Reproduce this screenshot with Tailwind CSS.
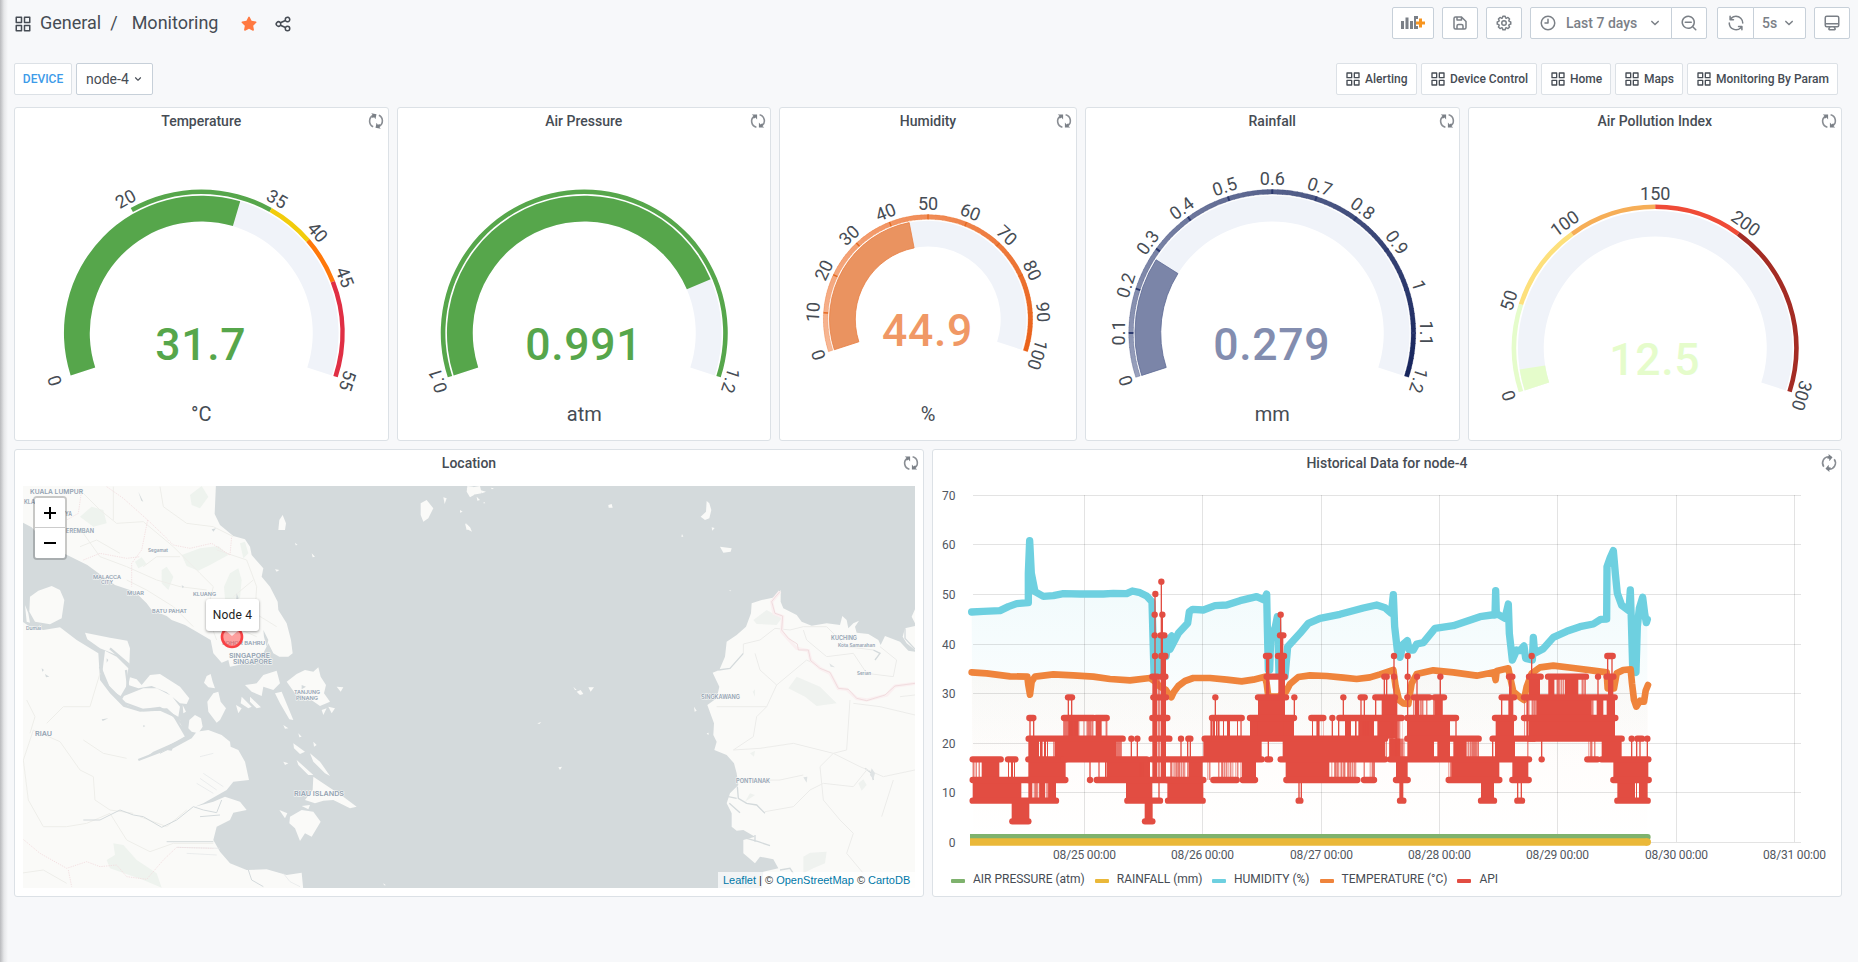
<!DOCTYPE html>
<html lang="en">
<head>
<meta charset="utf-8">
<title>Monitoring</title>
<script src="https://cdn.jsdelivr.net/npm/@tailwindcss/browser@4"></script>
</head>
<body class="relative h-[962px] w-[1858px] overflow-hidden bg-[#f7f8fa] font-['Roboto',sans-serif] text-[#464c54]">
<svg class="hidden">
  <defs>
    <symbol id="apps" viewBox="0 0 24 24"><path d="M10,13H3a1,1,0,0,0-1,1v7a1,1,0,0,0,1,1h7a1,1,0,0,0,1-1V14A1,1,0,0,0,10,13ZM9,20H4V15H9ZM21,2H14a1,1,0,0,0-1,1v7a1,1,0,0,0,1,1h7a1,1,0,0,0,1-1V3A1,1,0,0,0,21,2ZM20,9H15V4h5Zm1,4H14a1,1,0,0,0-1,1v7a1,1,0,0,0,1,1h7a1,1,0,0,0,1-1V14A1,1,0,0,0,21,13Zm-1,7H15V15h5ZM10,2H3A1,1,0,0,0,2,3v7a1,1,0,0,0,1,1h7a1,1,0,0,0,1-1V3A1,1,0,0,0,10,2ZM9,9H4V4H9Z"/></symbol>
    <symbol id="share" viewBox="0 0 24 24"><path d="M18,14a4,4,0,0,0-3.08,1.48l-5.1-2.35a3.64,3.64,0,0,0,0-2.26l5.1-2.35A4,4,0,1,0,14,6a4.17,4.17,0,0,0,.07.71L8.79,9.14a4,4,0,1,0,0,5.72l5.28,2.43A4.17,4.17,0,0,0,14,18a4,4,0,1,0,4-4ZM18,4a2,2,0,1,1-2,2A2,2,0,0,1,18,4ZM6,14a2,2,0,1,1,2-2A2,2,0,0,1,6,14Zm12,6a2,2,0,1,1,2-2A2,2,0,0,1,18,20Z"/></symbol>
    <symbol id="star" viewBox="0 0 24 24"><path d="M17.56,21a1,1,0,0,1-.46-.11L12,18.22l-5.1,2.67a1,1,0,0,1-1.45-1.06l1-5.63-4.12-4a1,1,0,0,1-.25-1,1,1,0,0,1,.81-.68l5.7-.83,2.51-5.13a1,1,0,0,1,1.8,0l2.54,5.12,5.7.83a1,1,0,0,1,.81.68,1,1,0,0,1-.25,1l-4.12,4,1,5.63a1,1,0,0,1-.4,1A1,1,0,0,1,17.56,21Z"/></symbol>
    <symbol id="save" viewBox="0 0 24 24"><path d="M20.71,9.29l-6-6a1,1,0,0,0-.32-.21A1.09,1.09,0,0,0,14,3H6A3,3,0,0,0,3,6V18a3,3,0,0,0,3,3H18a3,3,0,0,0,3-3V10A1,1,0,0,0,20.71,9.29ZM9,5h4V7H9Zm6,14H9V16a1,1,0,0,1,1-1h4a1,1,0,0,1,1,1Zm4-1a1,1,0,0,1-1,1H17V16a3,3,0,0,0-3-3H10a3,3,0,0,0-3,3v3H6a1,1,0,0,1-1-1V6A1,1,0,0,1,6,5H7V8A1,1,0,0,0,8,9h6a1,1,0,0,0,1-1V6.41l4,4Z"/></symbol>
    <symbol id="cog" viewBox="0 0 24 24"><path d="M21.32,9.55l-1.89-.63.89-1.78A1,1,0,0,0,20.13,6L18,3.87a1,1,0,0,0-1.15-.19l-1.78.89-.63-1.89A1,1,0,0,0,13.5,2h-3a1,1,0,0,0-.95.68L8.92,4.57,7.14,3.68A1,1,0,0,0,6,3.87L3.87,6a1,1,0,0,0-.19,1.15l.89,1.78-1.89.63A1,1,0,0,0,2,10.5v3a1,1,0,0,0,.68.95l1.89.63-.89,1.78A1,1,0,0,0,3.87,18L6,20.13a1,1,0,0,0,1.15.19l1.78-.89.63,1.89a1,1,0,0,0,.95.68h3a1,1,0,0,0,.95-.68l.63-1.89,1.78.89A1,1,0,0,0,18,20.13L20.13,18a1,1,0,0,0,.19-1.15l-.89-1.78,1.89-.63A1,1,0,0,0,22,13.5v-3A1,1,0,0,0,21.32,9.55ZM20,12.78l-1.2.4A2,2,0,0,0,17.64,16l.57,1.14-1.1,1.1L16,17.64a2,2,0,0,0-2.79,1.16l-.4,1.2H11.22l-.4-1.2A2,2,0,0,0,8,17.64l-1.14.57-1.1-1.1L6.36,16A2,2,0,0,0,5.2,13.18L4,12.78V11.22l1.2-.4A2,2,0,0,0,6.36,8L5.79,6.89l1.1-1.1L8,6.36A2,2,0,0,0,10.82,5.2l.4-1.2h1.56l.4,1.2A2,2,0,0,0,16,6.36l1.14-.57,1.1,1.1L17.64,8a2,2,0,0,0,1.16,2.79l1.2.4ZM12,8a4,4,0,1,0,4,4A4,4,0,0,0,12,8Zm0,6a2,2,0,1,1,2-2A2,2,0,0,1,12,14Z"/></symbol>
    <symbol id="clock" viewBox="0 0 24 24"><path d="M12,2A10,10,0,1,0,22,12,10,10,0,0,0,12,2Zm0,18a8,8,0,1,1,8-8A8,8,0,0,1,12,20ZM12,6a1,1,0,0,0-1,1v4H8a1,1,0,0,0,0,2h4a1,1,0,0,0,1-1V7A1,1,0,0,0,12,6Z"/></symbol>
    <symbol id="down" viewBox="0 0 24 24"><path d="M17,9.17a1,1,0,0,0-1.41,0L12,12.71,8.46,9.17a1,1,0,0,0-1.41,0,1,1,0,0,0,0,1.42l4.24,4.24a1,1,0,0,0,1.42,0L17,10.59A1,1,0,0,0,17,9.17Z"/></symbol>
    <symbol id="zoomout" viewBox="0 0 24 24"><path d="M21.71,20.29,18,16.61A9,9,0,1,0,16.61,18l3.68,3.68a1,1,0,0,0,1.42,0A1,1,0,0,0,21.71,20.29ZM11,18a7,7,0,1,1,7-7A7,7,0,0,1,11,18Zm4-8H7a1,1,0,0,0,0,2h8a1,1,0,0,0,0-2Z"/></symbol>
    <symbol id="sync" viewBox="0 0 24 24"><path d="M19.91,15.51H15.38a1,1,0,0,0,0,2h2.4A8,8,0,0,1,4,12a1,1,0,0,0-2,0,10,10,0,0,0,16.88,7.23V21a1,1,0,0,0,2,0V16.5A1,1,0,0,0,19.91,15.51ZM12,2A10,10,0,0,0,5.12,4.77V3a1,1,0,0,0-2,0V7.5a1,1,0,0,0,1,1h4.5a1,1,0,0,0,0-2H6.22A8,8,0,0,1,20,12a1,1,0,0,0,2,0A10,10,0,0,0,12,2Z"/></symbol>
    <symbol id="monitor" viewBox="0 0 24 24"><path d="M19,2H5A3,3,0,0,0,2,5V15a3,3,0,0,0,3,3H7.64l-.58,1a2,2,0,0,0,0,2,2,2,0,0,0,1.75,1h6.46A2,2,0,0,0,17,21a2,2,0,0,0,0-2l-.59-1H19a3,3,0,0,0,3-3V5A3,3,0,0,0,19,2ZM8.77,20,10,18H14l1.2,2ZM20,15a1,1,0,0,1-1,1H5a1,1,0,0,1-1-1V14H20Zm0-3H4V5A1,1,0,0,1,5,4H19a1,1,0,0,1,1,1Z"/></symbol>
    <symbol id="spin" viewBox="-8 -8 16 16" overflow="visible"><g fill="none" stroke="#8a8e94" stroke-width="1.6"><path d="M-1.6 6.2A6.2 6.2 0 0 1 -4 -4.7"/><path d="M1.6 -6.2A6.2 6.2 0 0 1 4 4.7"/></g><path fill="#7b8087" d="M-6.2-6.6H-.9V-1.6L-2.6-3.4-4.2-2.2-5-3.8-4.4-4.9ZM6.2 6.6H.9V1.6L2.6 3.4 4.2 2.2 5 3.8 4.4 4.9Z"/></symbol>
  </defs>
</svg>

<header class="flex h-[39px] items-end justify-between pl-[14px] pr-[8px]">
  <div class="flex h-8 items-center text-[18px] leading-none">
    <svg class="mt-[1px] h-[18px] w-[18px] fill-[#464c54]"><use href="#apps"/></svg>
    <span class="ml-2">General</span><span class="ml-[9px]">/</span><span class="ml-[14px]">Monitoring</span>
    <svg class="ml-[22px] mt-[2px] h-[18px] w-[18px] fill-[#ff7941]"><use href="#star"/></svg>
    <svg class="ml-4 mt-[2px] h-[18px] w-[18px] fill-[#464c54]"><use href="#share"/></svg>
  </div>
  <div class="flex h-8 items-stretch text-[14px] font-medium text-[#7b8087]">
    <div class="flex w-[42px] items-center justify-center rounded-[2px] border border-[#c7d0d9] bg-white">
      <svg class="h-[16px] w-[24px]" viewBox="0 0 24 16"><path fill="#7b8087" d="M0 6h3v8H0zM4.500 2.500h3V14h-3zM9 6h3v8H9z"/><path fill="#7b8087" d="M13 1h4v3h-2v7h2v3h-4z"/><path fill="#f79520" d="M18 3.500h3v3h3v3h-3v3h-3v-3h-3v-3h3z"/></svg>
    </div>
    <div class="ml-[8px] flex w-[36px] items-center justify-center rounded-[2px] border border-[#c7d0d9] bg-white"><svg class="h-[18px] w-[18px] fill-[#7b8087]"><use href="#save"/></svg></div>
    <div class="ml-[8px] flex w-[36px] items-center justify-center rounded-[2px] border border-[#c7d0d9] bg-white"><svg class="h-[18px] w-[18px] fill-[#7b8087]"><use href="#cog"/></svg></div>
    <div class="ml-[8px] flex w-[142px] items-center rounded-l-[2px] border border-[#c7d0d9] bg-white pl-2"><svg class="h-[18px] w-[18px] fill-[#7b8087]"><use href="#clock"/></svg><span class="ml-[9px] whitespace-nowrap">Last 7 days</span><svg class="ml-[9px] h-[18px] w-[18px] fill-[#7b8087]"><use href="#down"/></svg></div>
    <div class="-ml-px flex w-[36px] items-center justify-center rounded-r-[2px] border border-[#c7d0d9] bg-white"><svg class="h-[18px] w-[18px] fill-[#7b8087]"><use href="#zoomout"/></svg></div>
    <div class="ml-[10px] flex w-[37px] items-center justify-center rounded-l-[2px] border border-[#c7d0d9] bg-white"><svg class="h-[18px] w-[18px] fill-[#7b8087]"><use href="#sync"/></svg></div>
    <div class="-ml-px flex w-[53px] items-center rounded-r-[2px] border border-[#c7d0d9] bg-white pl-[8px]"><span>5s</span><svg class="ml-[3px] h-[18px] w-[18px] fill-[#7b8087]"><use href="#down"/></svg></div>
    <div class="ml-[8px] flex w-[36px] items-center justify-center rounded-[2px] border border-[#c7d0d9] bg-white"><svg class="h-[18px] w-[18px] fill-[#7b8087]"><use href="#monitor"/></svg></div>
  </div>
</header>

<nav class="mt-6 flex h-8 items-stretch justify-between pl-[14px] pr-[20px] text-[12px] font-medium">
  <div class="flex gap-1">
    <div class="flex w-[58px] items-center justify-center rounded-[2px] border border-[#dce1e6] bg-white text-[#3d9be9]">DEVICE</div>
    <div class="flex w-[77px] items-center rounded-[2px] border border-[#c7d0d9] bg-white pl-[9px] text-[14px] font-normal">node-4<svg class="ml-[2px] h-[14px] w-[14px] fill-[#464c54]"><use href="#down"/></svg></div>
  </div>
  <div class="flex gap-1">
    <div class="flex w-[81px] items-center gap-[4px] rounded-[2px] border border-[#dce1e6] bg-white pl-2"><svg class="h-4 w-4 fill-[#464c54]"><use href="#apps"/></svg>Alerting</div>
    <div class="flex w-[116px] items-center gap-[4px] whitespace-nowrap rounded-[2px] border border-[#dce1e6] bg-white pl-2"><svg class="h-4 w-4 fill-[#464c54]"><use href="#apps"/></svg>Device Control</div>
    <div class="flex w-[70px] items-center gap-[4px] rounded-[2px] border border-[#dce1e6] bg-white pl-2"><svg class="h-4 w-4 fill-[#464c54]"><use href="#apps"/></svg>Home</div>
    <div class="flex w-[68px] items-center gap-[4px] rounded-[2px] border border-[#dce1e6] bg-white pl-2"><svg class="h-4 w-4 fill-[#464c54]"><use href="#apps"/></svg>Maps</div>
    <div class="flex w-[151px] items-center gap-[4px] whitespace-nowrap rounded-[2px] border border-[#dce1e6] bg-white pl-2"><svg class="h-4 w-4 fill-[#464c54]"><use href="#apps"/></svg>Monitoring By Param</div>
  </div>
</nav>

<main class="ml-[14px] mt-3 grid w-[1828px] grid-cols-24 grid-rows-[334px_448px] gap-2">
  <section class="col-span-5 rounded-[3px] border border-[#dce1e6] bg-white">
    <div class="grid h-7 grid-cols-[24px_1fr_24px] items-center pb-[2px] text-center text-[14px] font-medium"><span></span><h2>Temperature</h2><svg class="ml-[4px] h-4 w-4" style="rotate:12deg"><use href="#spin"/></svg></div>
    <svg id="g1" class="block h-[304px] w-full"></svg>
  </section>
  <section class="col-span-5 rounded-[3px] border border-[#dce1e6] bg-white">
    <div class="grid h-7 grid-cols-[24px_1fr_24px] items-center pb-[2px] text-center text-[14px] font-medium"><span></span><h2>Air Pressure</h2><svg class="ml-[4px] h-4 w-4"><use href="#spin"/></svg></div>
    <svg id="g2" class="block h-[304px] w-full"></svg>
  </section>
  <section class="col-span-4 rounded-[3px] border border-[#dce1e6] bg-white">
    <div class="grid h-7 grid-cols-[24px_1fr_24px] items-center pb-[2px] text-center text-[14px] font-medium"><span></span><h2>Humidity</h2><svg class="ml-[4px] h-4 w-4"><use href="#spin"/></svg></div>
    <svg id="g3" class="block h-[304px] w-full"></svg>
  </section>
  <section class="col-span-5 rounded-[3px] border border-[#dce1e6] bg-white">
    <div class="grid h-7 grid-cols-[24px_1fr_24px] items-center pb-[2px] text-center text-[14px] font-medium"><span></span><h2>Rainfall</h2><svg class="ml-[4px] h-4 w-4"><use href="#spin"/></svg></div>
    <svg id="g4" class="block h-[304px] w-full"></svg>
  </section>
  <section class="col-span-5 rounded-[3px] border border-[#dce1e6] bg-white">
    <div class="grid h-7 grid-cols-[24px_1fr_24px] items-center pb-[2px] text-center text-[14px] font-medium"><span></span><h2>Air Pollution Index</h2><svg class="ml-[4px] h-4 w-4"><use href="#spin"/></svg></div>
    <svg id="g5" class="block h-[304px] w-full"></svg>
  </section>

  <section class="col-span-12 rounded-[3px] border border-[#dce1e6] bg-white">
    <div class="grid h-7 grid-cols-[24px_1fr_24px] items-center pb-[2px] text-center text-[14px] font-medium"><span></span><h2>Location</h2><svg class="ml-[4px] h-4 w-4"><use href="#spin"/></svg></div>
    <div class="relative m-2 h-[402px] overflow-hidden bg-[#d4dadc]">
      <svg class="block h-[402px] w-[892px]" viewBox="23 486 892 402">
        <g id="west" transform="translate(0 440) scale(.33333)" fill="#fafaf8">
          <path d="M60 130H648L644 222 660 255 700 288 735 298 750 320 755 345 790 385 785 410 810 440 833 485 835 510 860 550 873 600 878 640 865 650 838 650 820 640 805 610 790 640 760 655 715 675 690 680 685 660 665 668 640 640 632 600 590 575 555 555 515 540 500 528 455 510 440 490 405 455 345 435 310 410 262 375 215 352 170 330 130 300 95 262 60 243Z"/>
          <path d="M90 470 115 452 155 438 180 450 193 480 185 535 150 553 105 545 88 515ZM255 578 330 593 382 602 390 625 388 675 350 645 300 625 262 598ZM315 632 350 650 385 685 378 740 362 768 340 755 315 720 308 690ZM390 712 410 718 425 735 450 705 480 702 540 740 568 775 560 792 540 790 500 757 455 738 415 745 385 735ZM372 768 430 745 470 745 515 768 540 800 535 830 480 800 420 808 380 795 365 780ZM568 840 585 825 603 835 608 860 595 880 575 875 565 865ZM530 838 548 862 540 840ZM548 795 558 815 550 820Z"/>
          <path d="M60 540 90 560 130 570 180 562 230 600 295 640 300 720 330 760 370 800 420 815 480 812 520 830 555 890 540 900 460 935 410 972 400 955 430 950 520 925 575 895 590 875 625 870 665 885 690 905 692 920 715 930 735 965 747 1020 700 1025 680 1050 610 1090 585 1100 640 1085 675 1070 720 1085 740 1110 700 1118 690 1140 650 1160 640 1200 660 1235 690 1270 740 1290 800 1288 860 1305 905 1298 910 1350H60Z"/>
          <path d="M75 495 85 520 90 548 80 545ZM620 708 632 702 638 725 645 745 625 742 612 728ZM640 760 655 755 662 785 678 805 660 840 650 848 625 815 622 785ZM735 735 770 730 790 705 830 692 840 730 820 750 790 740 785 768 755 755ZM860 725 890 702 915 690 940 695 955 682 962 710 978 735 972 760 990 785 960 798 920 770 885 760ZM825 760 845 755 880 840 868 838 840 790ZM725 770 755 800 745 805 722 790ZM750 770 783 802 770 805 750 785ZM708 795 725 805 715 820ZM1010 740 1030 742 1022 755ZM985 800 1005 805 995 820ZM965 810 980 805 970 825ZM880 910 915 935 900 942 882 925ZM930 940 960 965 990 1008 975 1000 940 965ZM890 960 940 1005 925 1005 895 975ZM940 1010 985 1040 1030 1070 1070 1100 1050 1105 1000 1080 970 1082 945 1090 915 1080 938 1050ZM905 1098 930 1095 925 1108ZM838 1110 862 1120 855 1135ZM870 1130 905 1110 940 1115 962 1145 935 1190 915 1180 900 1203 885 1165 868 1150Z"/>
          <path d="M838 240 848 225 858 250 855 270 835 270ZM1262 190 1280 180 1300 205 1285 235 1270 245 1262 225ZM1400 145 1440 138 1445 160 1415 165ZM1395 250 1412 265 1400 270ZM935 340 945 350 938 352ZM825 388 838 390 830 395ZM885 308 893 315 887 316ZM1330 172 1340 175 1334 192ZM895 880 905 890 898 892ZM940 905 950 915 942 920ZM850 965 865 970 855 975ZM850 855 865 865 855 866ZM1150 1330 1158 1336 1152 1336Z"/>
          <g fill="#eef3ee"><path d="M545 345 600 325 655 318 685 345 630 375 595 392 560 378ZM690 400 715 385 725 420 720 475 675 478 672 440ZM240 230 275 200 310 210 320 250 280 260ZM485 390 500 380 520 410 505 450 485 430ZM570 165 605 138 625 170 600 205 575 195ZM405 365 425 352 440 372 415 385ZM340 1210 370 1215 410 1260 470 1300 485 1343 430 1320 330 1285 320 1260 345 1245ZM720 310 735 305 745 340 730 355Z"/></g>
          <g fill="none" stroke="#eeeeea" stroke-width="3"><path d="M250 160 300 210 350 250 430 245 520 320M340 140V240M520 320 600 400 640 440 620 520 650 600M250 280 300 350 380 380 470 420 540 440 620 450M380 420 440 450 520 500 580 560M430 380 470 350 540 350M650 330 740 360 770 440 765 520 830 560M700 290 640 260 560 250 490 200 480 140M240 320 290 300 360 340M760 420 700 470M640 540 700 560 770 590M80 780 105 830 90 880M100 870 180 905 240 990 280 1010 285 1080 330 1110 400 1120M100 870 70 960 85 1080 130 1160 200 1160 260 1150 330 1120M330 1120 380 1200 450 1235 520 1210 640 1210M420 1130 500 1160 560 1110M140 850 190 800 270 800 300 700M60 1300 130 1290 200 1330M250 900 310 940 380 955"/></g>
          <g fill="none" stroke="#d4dadc" stroke-width="3"><path d="M250 1140 300 1140 360 1110 400 1125 430 1130 485 1162 530 1140 580 1100 610 1110 650 1118 665 1080M500 1205 640 1205M600 1130 660 1125M480 940 510 925M745 1290 755 1320 790 1340"/><path stroke-width="7" d="M330 625 388 675M378 690 385 745M300 680 325 740 375 790 430 810 500 808 545 850 560 890 480 935 415 960"/><path stroke-width="2" stroke="#e3e6e7" d="M640 940 600 950M610 1000 670 1040M600 1015 650 1050M590 1030 640 1060M530 1222 660 1225M560 1240 650 1245M850 1300 870 1325 900 1340"/></g>
          <g fill="none" stroke="#f2dcdf" stroke-width="2.500" stroke-dasharray="4 3"><path d="M320 140 370 175 443 240 490 285 520 315 570 325 635 310 690 345 695 290M443 240 425 330 395 370 395 440M245 150 235 220 200 240M250 360 300 340 380 355 420 350M60 1190 120 1240 200 1285 260 1265 300 1280 350 1275 380 1310 440 1318 490 1260 530 1222 640 1225M205 1290 215 1340"/></g>
          <path fill="#d4dadc" d="M415 155 430 185 424 182ZM635 268 648 265 640 275ZM125 685 132 690 127 695ZM135 702 148 710 138 712ZM305 838 325 835 308 843ZM430 855 436 858 430 862ZM545 435 552 440 548 445ZM710 460 716 475 708 485ZM790 570 805 600 800 620 792 590ZM320 655 325 660 320 668ZM500 930 520 920 515 932ZM905 735 918 740 905 748Z"/>
        </g>
        <g id="east" transform="translate(460 440) scale(.33333)" fill="#fafaf8">
          <path d="M1365 630 1340 610 1328 590 1335 565 1365 558ZM1365 508 1355 530 1365 550ZM1365 635 1345 632 1320 605 1275 588 1262 615 1255 600 1225 582 1190 578 1185 560 1197 542 1180 550 1165 565 1160 540 1147 528 1140 555 1100 550 1055 557 1025 545 1010 525 970 505 962 485V450L945 472 905 480 875 490 873 520 858 560 830 585 800 605 795 650 778 690 758 698 778 740 770 775 742 795 762 850 760 885 770 905 763 930 800 945 822 970 830 1000 835 1035 810 1060 800 1090 815 1120 815 1160 830 1172 850 1170 885 1190 850 1200 850 1240 885 1270 900 1250 940 1258 955 1285 910 1295 905 1350H1365Z"/>
          <path d="M22 138 40 140 42 165 30 172 20 155ZM445 195 455 192 458 203 446 203ZM740 183 748 190 754 210 748 235 735 240 722 230 738 215ZM780 320 815 325 812 335 790 338ZM18 250 30 262 36 275 22 268ZM345 715 352 720ZM350 755 362 750 370 762 360 765ZM385 742 402 742 392 755ZM340 740 350 750 345 750ZM295 982 306 980 300 990ZM702 800 710 812 704 815ZM740 880 746 878 745 886ZM755 262 764 264 757 272ZM666 282 670 290 664 290ZM60 150 78 155 66 160ZM92 143 102 145 96 148ZM50 170 60 180 52 182ZM72 185 76 190 70 190ZM0 210 8 215 0 218ZM232 850 244 846 238 852ZM808 450 814 452 810 454Z"/>
          <g fill="#eff2ef"><path d="M880 540 920 510 965 535 950 555 890 552ZM985 745 1010 710 1080 740 1130 790 1070 798 1035 770ZM1030 1300 1030 1250 1050 1238 1100 1235 1095 1270 1060 1285ZM855 1085 870 1060 885 1065ZM1195 1030 1210 1018 1220 1035 1205 1052ZM870 940 885 932 882 950ZM878 755 885 748 885 770Z"/></g>
          <path fill="none" stroke="#d4dadc" stroke-width="4" d="M775 690 810 685 850 640M860 1195 895 1205 930 1217M832 1040 835 1075 860 1090 890 1095 915 1120M1335 565 1335 595 1365 628M885 1185 885 1205M1215 985 1235 1000 1240 1020M805 1070 830 1075M808 1090 840 1118M1240 630 1260 640 1245 660M960 1290 990 1285 1000 1300"/>
          <g fill="none" stroke="#ececea" stroke-width="3"><path d="M850 640 850 612 900 600 945 565 990 570 1030 560 1100 560 1160 620 1240 630M885 640 900 690 950 735 1040 660 1080 680M950 735 920 800 770 800M1170 780 1160 930 1120 940 1080 980 1090 1080 1140 1140 1180 1180 1160 1240 1210 1300M920 800 890 830 880 890 820 930 900 925 1000 910 1120 940 1200 980 1270 1010 1365 990M915 1115 1000 1100 1050 1050 1090 1030 1180 1040 1220 990M1030 570 1040 600 1100 650 1180 640 1220 700 1300 710 1310 660 1260 620M835 1020 960 1020 1030 1005M1180 790 1260 800 1365 825M1300 1020 1265 1130M1320 770 1365 765"/></g>
          <path fill="none" stroke="#faf0f1" stroke-width="10" d="M960 455 935 485 942 520 968 530 965 575 1010 625 1045 632 1052 660 1080 685 1110 700 1135 745 1160 748 1190 775 1220 780 1280 765 1305 738 1365 730"/>
          <path fill="none" stroke="#eed7da" stroke-width="2.500" d="M960 455 945 472 935 485 945 520 968 528 965 570 985 595 1012 612 1015 630 1045 630 1052 662 1080 685 1110 697 1135 745 1165 748 1190 775 1220 782 1275 765 1305 738 1365 730"/>
          <path fill="#dfe3e4" d="M1108 670 1125 682 1112 680ZM1030 1012 1042 1010 1040 1028ZM1235 985 1245 1000 1240 1018 1230 1005Z"/>
        </g>
        <g id="places" font-family="Inter, sans-serif" font-weight="600" fill="#93a2b2" stroke="#fafaf8" stroke-width="1" paint-order="stroke"></g>
      </svg>
      <div class="absolute left-[10px] top-[10px] w-[34px] rounded-[4px] border-2 border-black/20 bg-clip-padding text-center text-black">
        <div class="flex h-[30px] items-center justify-center rounded-t-[2px] border-b border-[#ccc] bg-white"><svg class="h-3 w-3" viewBox="0 0 12 12"><path d="M6 0V12M0 6H12" stroke="#000" stroke-width="2"/></svg></div>
        <div class="flex h-[30px] items-center justify-center rounded-b-[2px] bg-white"><svg class="h-3 w-3" viewBox="0 0 12 12"><path d="M0 6H12" stroke="#000" stroke-width="2"/></svg></div>
      </div>
      <svg class="absolute left-[197px] top-[139px] h-6 w-6 overflow-visible" viewBox="-12 -12 24 24"><circle r="10" fill="#f44" fill-opacity=".5" stroke="#f94144" stroke-width="2.600"/><path d="M-7 -6H7L0 0Z" transform="translate(0 -1)" fill="#fff" fill-opacity=".75"/></svg>
      <div class="absolute left-[183px] top-[113px] flex h-8 w-[53px] items-center justify-center rounded-[3px] bg-white text-[12px] tracking-[0.2px] text-[#222] shadow-[0_1px_3px_rgba(0,0,0,0.4)]">Node 4</div>
      <div class="absolute bottom-0 right-0 h-4 w-[197px] whitespace-nowrap bg-white/70 pl-[5px] font-['Liberation_Sans',sans-serif] text-[11px] leading-4 text-[#333]"><span class="text-[#0078a8]">Leaflet</span> | © <span class="text-[#0078a8]">OpenStreetMap</span> © <span class="text-[#0078a8]">CartoDB</span></div>
    </div>
  </section>

  <section class="col-span-12 rounded-[3px] border border-[#dce1e6] bg-white">
    <div class="grid h-7 grid-cols-[24px_1fr_24px] items-center pb-[2px] text-center text-[14px] font-medium"><span></span><h2>Historical Data for node-4</h2><svg class="ml-[4px] h-4 w-4" style="rotate:40deg"><use href="#spin"/></svg></div>
    <svg id="chart" class="block h-[390px] w-[908px]" viewBox="933 478 908 390"></svg>
    <div class="flex h-[22px] items-center pl-[18px] text-[12px]">
      <i class="mr-2 mt-1 h-1 w-[14px] rounded-[1px] bg-[#7eb26d]"></i><span class="mr-[10px]">AIR PRESSURE (atm)</span>
      <i class="mr-2 mt-1 h-1 w-[14px] rounded-[1px] bg-[#eab839]"></i><span class="mr-[9.500px]">RAINFALL (mm)</span>
      <i class="mr-2 mt-1 h-1 w-[14px] rounded-[1px] bg-[#6ed0e0]"></i><span class="mr-[10px]">HUMIDITY (%)</span>
      <i class="mr-2 mt-1 h-1 w-[14px] rounded-[1px] bg-[#ef843c]"></i><span class="mr-[10px]">TEMPERATURE (°C)</span>
      <i class="mr-2 mt-1 h-1 w-[14px] rounded-[1px] bg-[#e24d42]"></i><span>API</span>
    </div>
  </section>
</main>
<div class="absolute left-0 top-0 h-full w-2 bg-linear-to-r from-[#b9babd] via-[#e6e7e9] to-[#f7f8fa]"></div>

<script>
const rad = a => a * Math.PI / 180;
const pt = (cx, cy, r, a) => (cx + r * Math.sin(rad(a))).toFixed(2) + ' ' + (cy - r * Math.cos(rad(a))).toFixed(2);
const ring = (cx, cy, r0, r1, a0, a1, attrs) => {
  const big = a1 - a0 > 180 ? 1 : 0;
  return `<path d="M${pt(cx, cy, r1, a0)}A${r1} ${r1} 0 ${big} 1 ${pt(cx, cy, r1, a1)}L${pt(cx, cy, r0, a1)}A${r0} ${r0} 0 ${big} 0 ${pt(cx, cy, r0, a0)}Z" ${attrs}/>`;
};
const mix = (a, b, t) => 'rgb(' + a.map((v, i) => Math.round(v + (b[i] - v) * t)) + ')';
function gauge(id, o) {
  const half = o.w / 2, cx = half, cy = o.cy - 136, R = o.R;
  const ang = v => (v - o.min) / (o.max - o.min) * 216 - 108;
  let s = ring(cx, cy, R - 32, R - 6.2, -108, 108, 'fill="#f0f3f9"');
  s += ring(cx, cy, R - 32, R - 6.2, -108, ang(o.value), `fill="${o.fill}" ${o.edge ? `stroke="${o.edge}" stroke-width=".8"` : ''}`);
  if (o.grad) {
    for (let i = 0; i < 108; i++) s += ring(cx, cy, R - 4.6, R, -108 + i * 2, Math.min(108, -105.6 + i * 2), `fill="${mix(o.grad[0], o.grad[1], i / 107)}"`);
    o.labels.slice(1, -1).forEach(v => s += ring(cx, cy, R - 4.6, R, ang(v) - .4, ang(v) + .4, `fill="${o.tick}"`));
    s += ring(cx, cy, R - 4.6, R, -108, 108, `fill="none" stroke="${o.tick}" stroke-opacity=".35" stroke-width=".7"`);
  } else o.bands.forEach(b => s += ring(cx, cy, R - 4.600, R, ang(b[0]), ang(b[1]), `fill="${b[2]}"`));
  o.labels.forEach(v => {
    const a = ang(v), p = pt(cx, cy, R + 4.2, a);
    s += `<text transform="translate(${p}) rotate(${a.toFixed(2)})" font-size="18" text-anchor="middle" fill="#464c54">${v}</text>`;
  });
  s += `<text x="${cx - .4}" y="${cy + o.vy}" font-size="44.500" font-weight="500" letter-spacing=".7" text-anchor="middle" fill="${o.text || o.fill}">${o.value}</text>`;
  if (o.unit) s += `<text x="${cx}" y="284.500" font-size="20" text-anchor="middle" fill="#464c54">${o.unit}</text>`;
  const el = document.getElementById(id);
  el.setAttribute('viewBox', `0 0 ${o.w} 304`);
  el.innerHTML = s;
}
const G = '#56a64b';
gauge('g1', {w: 372.5, cy: 333, R: 143.5, vy: 26.500, min: 0, max: 55, value: 31.7, unit: '°C', fill: G, labels: [0, 20, 35, 40, 45, 55], bands: [[20, 35, G], [35, 40, '#f2cc0c'], [40, 45, '#ff780a'], [45, 55, '#e02f44']]});
gauge('g2', {w: 372.5, cy: 333, R: 143.5, vy: 26.500, min: .1, max: 1.2, value: .991, unit: 'atm', fill: G, labels: [.1, 1.2], bands: [[.1, 1.2, G]]});
gauge('g3', {w: 296, cy: 319.3, R: 104.7, vy: 27, min: 0, max: 100, value: 44.9, unit: '%', fill: '#ea9360', edge: '#e87f42', text: '#f09865', tick: '#e56a22', labels: [0, 10, 20, 30, 40, 50, 60, 70, 80, 90, 100], grad: [[247, 184, 150], [234, 96, 24]]});
gauge('g4', {w: 372.5, cy: 333, R: 143.5, vy: 26.500, min: 0, max: 1.2, value: .279, unit: 'mm', fill: '#7b85a8', edge: '#5d6994', text: '#838daf', tick: '#2c3a70', labels: [0, .1, .2, .3, .4, .5, .6, .7, .8, .9, 1, 1.1, 1.2], grad: [[152, 160, 188], [22, 36, 92]]});
gauge('g5', {w: 372.5, cy: 348, R: 143.5, vy: 26.500, min: 0, max: 300, value: 12.5, fill: '#e5fccb', labels: [0, 50, 100, 150, 200, 300], bands: [[0, 50, '#e5fccb'], [50, 100, '#fde07c'], [100, 150, '#f6ae57'], [150, 200, '#ef4b37'], [200, 300, '#a42c24']]});

// name, left, baseline, width, size
document.getElementById('places').innerHTML = [
  ['KUALA LUMPUR', 30, 494, 53, 6.2], ['KLA', 24, 504, 11, 5.8], ['YA', 65, 516, 7, 5.8], ['EREMBAN', 66, 533, 28, 5.600], ['Segamat', 148, 552, 20, 4.800],
  ['MALACCA', 93, 578.500, 28, 5.2], ['CITY', 101, 584, 12, 5.2], ['MUAR', 127, 595, 17, 5.2], ['KLUANG', 193, 596, 23, 5.2], ['BATU PAHAT', 152, 613, 35, 5.2],
  ['Dumai', 26, 629.500, 15, 4.800], ['JOHOR BAHRU', 222, 645, 43, 5.2], ['SINGAPORE', 229, 658, 41, 6.4], ['SINGAPORE', 233, 664, 39, 6], ['TANJUNG', 294, 694.300, 26, 5.2],
  ['PINANG', 296, 700, 22, 5.2], ['RIAU', 35, 736, 17, 6.5], ['RIAU ISLANDS', 294, 796, 50, 6.5], ['KUCHING', 831, 639.500, 26, 5.600], ['Kota Samarahan', 838, 647, 37, 4.800], ['Serian', 857, 674.500, 14, 4.800],
  ['SINGKAWANG', 701, 698.700, 39, 5.600], ['PONTIANAK', 736, 783.200, 34, 5.600]
].map(p => `<text x="${p[1]}" y="${p[2]}" textLength="${p[3]}" lengthAdjust="spacingAndGlyphs" font-size="${p[4]}">${p[0]}</text>`).join('');

// Chart: series are given in thirds of a pixel, measured from (920, 440)
const L = [1206, 1144, 1082, 1020, 958, 896, 834, 772, 710, 648, 586, 524, 462, 425];
let seed = 7;
const rnd = () => (seed = (seed * 16807) % 2147483647) / 2147483647;
let axes = '', c = '';
for (let v = 0; v <= 7; v++) {
  const y = Math.round(842 - v * 49.6) + .5;
  axes += `<path d="M973 ${y}H1801" stroke="#000" stroke-opacity=".11"/><text x="955.500" y="${y + 4}" text-anchor="end">${v * 10}</text>`;
}
[1084.500, 1202.500, 1321.500, 1439.500, 1557.500, 1676.500, 1794.500].forEach((x, i) => axes += `<path d="M${x} 495V842" stroke="#000" stroke-opacity=".11"/><text x="${x}" y="859" text-anchor="middle" textLength="63">08/${25 + i} 00:00</text>`);
const hum = '155,516 190,514 240,512 265,500 290,491 325,488 325,400 329,302 334,400 345,455 370,469 400,467 430,461 480,462 550,462 580,460 620,461 637,453 660,458 680,468 696,485 702,700 714,700 718,600 730,590 738,650 745,600 755,588 750,628 775,580 803,550 808,515 818,508 850,510 885,497 920,495 960,482 1010,470 1032,480 1040,462 1042,560 1045,690 1049,690 1052,600 1066,560 1072,530 1077,700 1095,710 1103,620 1140,580 1165,550 1200,535 1260,523 1330,504 1370,495 1395,503 1414,520 1420,464 1424,560 1432,630 1440,652 1450,612 1462,602 1468,630 1480,630 1490,612 1510,608 1545,565 1600,557 1680,530 1715,525 1725,525 1727,452 1729,520 1755,535 1765,492 1768,580 1777,660 1790,630 1800,632 1812,618 1817,655 1837,660 1840,592 1844,640 1870,626 1900,592 1940,574 1980,560 2020,552 2042,538 2060,537 2061,380 2070,355 2080,332 2086,400 2092,460 2105,496 2127,512 2131,450 2134,540 2138,680 2148,697 2152,560 2158,505 2168,472 2174,520 2179,548 2182,538';
const temp = '155,697 200,700 270,709 322,710 325,735 330,764 335,725 345,710 400,703 460,706 520,710 570,717 630,721 690,714 705,725 720,740 738,750 748,765 754,772 762,755 775,738 795,723 820,714 870,714 920,719 965,724 1000,719 1035,710 1040,730 1045,770 1075,770 1098,755 1110,732 1135,711 1170,706 1220,708 1270,713 1310,717 1350,712 1380,703 1420,690 1427,740 1437,780 1450,790 1465,792 1475,730 1490,702 1540,691 1600,697 1670,707 1722,697 1727,720 1730,693 1765,685 1768,700 1780,755 1800,772 1812,780 1820,740 1835,700 1860,682 1900,677 1960,684 2020,692 2060,697 2063,745 2082,745 2090,700 2110,690 2132,688 2136,730 2142,780 2149,800 2160,782 2172,785 2177,752 2184,735';
c += '<defs>' + [['h', '#6ed0e0', .1], ['t', '#ef843c', .06]].map(g => `<linearGradient id="f${g[0]}" gradientUnits="userSpaceOnUse" x1="0" x2="0" y1="400" y2="${g[0] === 'h' ? 960 : 1206}"><stop offset="0" stop-color="${g[1]}" stop-opacity="${g[2]}"/><stop offset="1" stop-color="${g[1]}" stop-opacity="0"/></linearGradient>`).join('') + '</defs>';
const open = '<g transform="translate(920 440) scale(.33333)" stroke-linejoin="round" stroke-linecap="round">';
c += open + `<path d="M159,1206 ${hum} 2182,1206Z" fill="url(#fh)"/><path d="M159,1206 ${temp} 2182,1206Z" fill="url(#ft)"/></g>` + axes + open;
c += '<path d="M150 1191H2183" stroke="#7eb26d" stroke-width="18" stroke-linecap="butt"/><circle cx="2183" cy="1191" r="9" fill="#7eb26d"/><path d="M150 1206H2182" stroke="#eab839" stroke-width="23" stroke-linecap="butt"/><circle cx="2182" cy="1206" r="11" fill="#eab839"/>';
c += `<polyline points="${hum}" fill="none" stroke="#6ed0e0" stroke-width="22"/><polyline points="${temp}" fill="none" stroke="#ef843c" stroke-width="20"/>`;
// solid blocks: x0, x1, top level, bottom level
const B = [[158,304,3,2],[325,337,3,2],[185,238,4,3],[275,328,2,1],[325,437,4,3],[358,375,3,2],[385,408,3,2],[325,345,5,4],[405,590,5,4],[445,475,6,5],[527,545,6,5],[560,690,4,3],[618,697,3,2],[674,698,2,1],[697,712,8,3],[722,738,9,3],[742,850,3,2],[805,848,4,3],[850,1025,5,4],[965,1008,4,3],[990,1020,6,5],[1014,1095,7,5],[1038,1048,9,7],[1075,1095,9,7],[1080,1090,10,8],[1090,1122,6,5],[1088,1395,5,4],[1097,1228,4,3],[1315,1360,6,5],[1372,1428,6,5],[1385,1428,7,6],[1408,1440,5,4],[1430,1448,4,3],[1428,1463,4,3],[1438,1450,3,2],
[1462,1542,5,4],[1462,1590,6,5],[1485,1498,7,6],[1543,1568,7,6],[1552,1590,5,4],[1600,1640,5,4],[1595,1738,4,3],[1683,1722,3,2],[1725,1785,5,4],[1727,1782,6,5],[1765,1780,7,6],[1767,1775,8,7],[1777,1825,4,3],[1827,1860,8,7],[1850,2015,7,6],[1827,2085,6,5],[1885,1902,8,7],[1935,1975,8,7],[2030,2050,7,6],[2060,2085,7,6],[2064,2080,8,7],[2045,2105,5,4],[2080,2185,4,3],[2092,2145,3,2],[2160,2183,3,2],[1428,1432,7,4]];
// striped areas: x0, x1, top, bottom, density
const S = [[158,184,4,3,.6],[264,287,4,3,.6],[304,325,3,2,.3],[338,410,3,2,.65],[345,405,5,4,.45],[590,608,5,4,.7],[430,520,6,5,.65],[545,562,6,5,.5],[525,560,4,3,.5],[655,680,4,3,.5],[745,804,4,3,.65],[870,965,6,5,.6],[850,962,4,3,.35],[1170,1210,6,5,.6],[1275,1372,6,5,.7],[1228,1312,4,3,.6],[1328,1365,4,3,.7],[1405,1448,6,4,.7],[1385,1465,5,4,.5],[1480,1525,7,6,.5],[1540,1575,7,6,.6],[1585,1600,4,3,.6],[1640,1677,5,4,.8],[1785,1825,5,4,.4],[1812,1826,7,5,.6],[1826,1850,7,6,.8],[1880,1998,8,7,.65],[2015,2030,7,6,.4],[2002,2032,5,4,.5],[2145,2160,3,2,.6]];
// single verticals: x, top, bottom
const V = [[330,6,5],[341,6,5],[445,7,6],[455,7,6],[510,4,3],[634,5,4],[652,5,4],[705,12,8],[724,13,9],[727,11,8],[717,8,2],[783,5,4],[803,5,4],[811,5,4],[886,7,6],[1082,11,9],[1045,5,4],[1123,7,6],[1137,3,2],[1144,3,2],[1237,6,5],[1256,6,5],[1270,7,6],[1323,7,6],[1333,7,6],[1367,7,6],[1393,8,7],[1400,8,7],[1422,9,7],[1463,9,5],[1491,8,7],[1561,8,7],[1608,6,5],[1718,5,4],[1745,7,6],[1793,3,2],[1804,3,2],[1835,9,8],[1865,5,4],[2034,8,7],[2063,9,8],[2076,9,8],[2135,5,4],[2150,5,4],[2160,5,4],[2182,5,4]];
// point runs: level, x0, x1
const D = [[4,158,242],[4,264,286],[3,158,325],[2,158,408],[1,277,325],[4,325,437],[3,325,436],[5,326,608],[6,328,340],[7,444,456],[6,432,520],[6,528,560],[4,430,680],[3,510,510],[3,530,715],[2,622,720],[1,675,697],[5,634,634],[5,652,652],[12,706,706],[11,704,704],[10,704,704],[9,705,705],[8,697,712],[7,700,738],[6,697,742],[5,695,748],[4,695,845],[3,720,760],[13,724,724],[11,727,727],[10,722,733],[9,724,736],[8,725,736],[2,744,848],[3,740,850],[5,783,783],[5,805,811],[5,854,1395],[4,850,1025],[3,880,950],[3,968,1005],[6,876,965],[7,886,886],[6,990,1122],[7,1014,1098],[9,1038,1048],[8,1040,1094],[9,1074,1092],[10,1080,1090],[11,1082,1082],[4,1042,1050],[4,1082,1395],[7,1123,1123],[3,1099,1312],[2,1136,1141],[3,1332,1362],[6,1174,1210],[6,1237,1237],[6,1258,1445],[7,1270,1270],[7,1322,1334],[7,1366,1425],[8,1393,1400],[8,1422,1422],[9,1422,1422],[4,1410,1545],[3,1428,1463],[2,1440,1450],[6,1462,1608],[7,1462,1462],[7,1482,1528],[7,1544,1572],[8,1463,1463],[9,1463,1463],[8,1491,1491],[8,1561,1561],[5,1462,1676],[4,1552,1827],[3,1586,1738],[2,1683,1722],[5,1718,1840],[6,1725,1782],[7,1745,1782],[8,1767,1777],[3,1777,1826],[2,1792,1806],[6,1812,2086],[7,1812,2084],[8,1827,1862],[8,1884,1998],[9,1835,1835],[8,2034,2034],[8,2060,2080],[9,2062,2078],[4,1865,1865],[4,2002,2032],[5,1830,2105],[4,2045,2185],[3,2080,2186],[2,2092,2183],[5,2135,2135],[5,2152,2166],[5,2182,2182]];
const rect = (x0, x1, a, b, o) => `<rect x="${x0.toFixed(1)}" y="${L[a]}" width="${(x1 - x0).toFixed(1)}" height="${L[b] - L[a]}" opacity="${o}"/>`;
c += '<g fill="#e24d42">' + B.map(b => rect(...b, 1)).join('');
S.forEach(([x0, x1, a, b, d]) => { for (let x = x0; x < x1; x += 3) if (rnd() < d) c += rect(x, Math.min(x + 3, x1), a, b, rnd() < .3 ? .6 : 1); });
c += V.map(([x, a, b]) => rect(x - 2, x + 2, a, b, 1)).join('') + '</g>';
c += '<g stroke="#e24d42" stroke-width="19">' + D.map(([l, a, b]) => `<path d="M${a} ${L[l]}H${b + .1}"/>`).join('') + '</g></g>';
const ch = document.getElementById('chart');
ch.setAttribute('font-size', '12');
ch.setAttribute('fill', '#52575f');
ch.innerHTML = c;
</script>
</body>
</html>
